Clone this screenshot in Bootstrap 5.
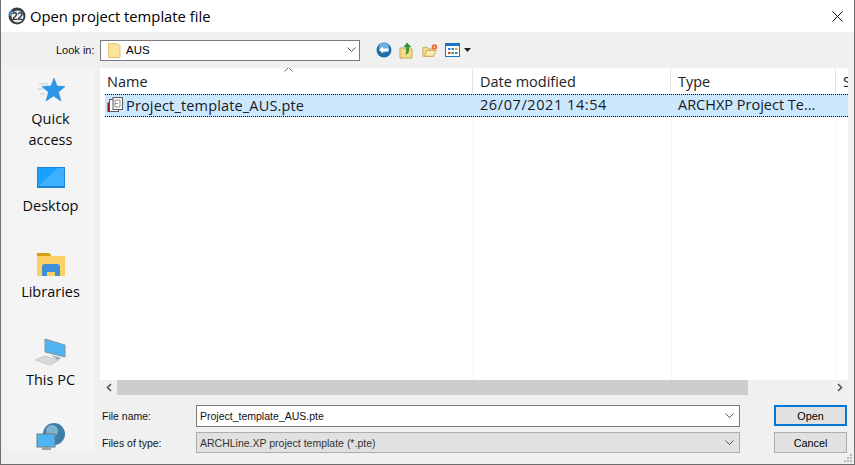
<!DOCTYPE html>
<html lang="en"><head><meta charset="utf-8"><title>Open project template file</title>
<link rel="stylesheet" href="https://cdn.jsdelivr.net/npm/bootstrap@5.3.0/dist/css/bootstrap.min.css">
<style>
html,body{height:465px;overflow:hidden;background:#f0f0f0}
body{font-family:"Open Sans","Noto Sans",sans-serif;color:#000}
.dlg{width:855px;height:465px;border:solid #6e6e6e;border-width:0 1px 1px 1px;background:#f0f0f0;position:relative;overflow:hidden}
.ttl{height:32px;background:#fff;padding-left:7px;font-size:14.8px;gap:4px}
.ttl-x{width:11px;height:11px;margin-right:11px}
.tools{height:36px;padding-left:55px}
.lbl{width:44px;font:11px "Liberation Sans",sans-serif;color:#111}
.look{width:260px;height:21px;background:#fff;border:1px solid #7a7a7a;padding:0 3px 0 7px;gap:5px;font:11.5px "Liberation Sans",sans-serif}
.tbi{margin-left:16px;gap:7px}
.mid{height:327px;padding-left:6px;gap:6px}
.side{width:87px;height:382px;background:#f4f4f4;overflow:hidden;text-align:center;font-size:14.5px;line-height:21px;color:#0c0c0c;flex:none}
.side-it{height:86px;display:flow-root}
.side-it svg{display:block;margin-left:auto;margin-right:auto}
.sq{height:92px;padding-top:9px}
.sq svg{margin-bottom:3px}
.sd svg{margin-top:7px;margin-bottom:7px}
.sl svg{margin-top:6px;margin-bottom:5px}
.sp svg{margin-top:6px;margin-bottom:3px}
.sn svg{margin-top:5px}
.pane{width:748px}
.list{height:312px;background:#fff;position:relative;overflow:hidden}
.hdr{height:26px;font-size:14.5px;color:#222;position:relative}
.cl1{width:373px;padding-left:7px}.cl2{width:198px;padding-left:7px}.cl3{width:165px;padding-left:7px}.cl4{padding-left:7px;width:12px;overflow:hidden}
.hdr>div{border-right:1px solid #e5e5e5;height:26px;line-height:27px}
.hdr>.cl4{border:0}
.sort{position:absolute;left:184px;top:-1px}
.sel{height:23px;margin-left:5px;background:#cce8ff;border-top:1px dotted #000;border-bottom:1px dotted #000;font-size:14.5px;color:#1a1a1a;line-height:20px;position:relative;z-index:1}
.sel>div{white-space:nowrap;overflow:hidden}
.s1{width:368px;padding-left:2px;gap:2px;letter-spacing:.16px}.s2{width:198px;padding-left:7px;letter-spacing:.58px}.s3{width:175px;padding-left:7px}
.gl{position:absolute;top:26px;bottom:0;width:1px;background:#f1f5fa}
.scr{height:15px;background:#f0f0f0}
.arr{width:17px;height:15px;flex:none}
.thumb{width:631px;background:#cdcdcd}
.bot{position:absolute;left:101px;top:405px;width:746px}
.frow{height:21px}
.frow+.frow{margin-top:6px}
.flb{width:94px;font:10.5px "Liberation Sans",sans-serif;color:#111}
.fld{width:544px;height:22px;border:1px solid #7a7a7a;background:#fff;padding:0 5px 0 3px;font:10.5px "Liberation Sans",sans-serif;color:#111}
.fld.dis{background:#e1e1e1;border-color:#adadad;height:21px;color:#333}
.wbtn{width:73px;height:21px;margin-left:34px;border:1px solid #adadad;background:#e1e1e1;border-radius:0;padding:0;font:10.8px "Liberation Sans",sans-serif;color:#000}
.wbtn.on{border:2px solid #0078d7}
.grip{position:absolute;right:1px;bottom:1px}
</style></head><body>
<div class="dlg d-flex flex-column">
<div class="ttl d-flex align-items-center flex-none">
<svg width="18" height="18" viewBox="0 0 18 18"><circle cx="9" cy="9" r="8.5" fill="#3a3f45"/><path d="M1 9a8 8 0 0 1 3-6l2 3a4 4 0 0 0-1 3z" fill="#4a8fd0"/><circle cx="9.5" cy="9.5" r="6" fill="#eef1f3"/><text x="9.5" y="13" font-size="10" font-weight="700" text-anchor="middle" font-family="Liberation Sans" fill="#2e3338">22</text></svg>
<span class="flex-grow-1">Open project template file</span>
<svg class="ttl-x" viewBox="0 0 11 11"><path d="M.5.5l10 10M10.500.5l-10 10" stroke="#111" stroke-width="1"/></svg>
</div>
<div class="tools d-flex align-items-center">
<span class="lbl">Look in:</span>
<div class="look d-flex align-items-center">
<svg width="13" height="16" viewBox="0 0 13 16"><path d="M.5 1.500h8l3.500 2v12H.5z" fill="#fbe39a" stroke="#e3c36f"/></svg>
<span class="flex-grow-1">AUS</span>
<svg width="9" height="6" viewBox="0 0 9 6"><path d="M.5.5l4 4 4-4" fill="none" stroke="#555"/></svg>
</div>
<div class="tbi d-flex align-items-center">
<svg width="16" height="16" viewBox="0 0 16 16"><circle cx="8" cy="8" r="7.500" fill="#1c6fa8"/><circle cx="8" cy="5.500" r="5" fill="#6cb2dc"/><path d="M3 8l4-3.500v2h5.500v3H7v2z" fill="#fff"/></svg>
<svg width="16" height="17" viewBox="0 0 16 17"><path d="M1 6h4l1 1h7v9H1z" fill="#f5dc8c" stroke="#c9a653"/><path d="M8 1l4 4h-2.500v4c0 2-1.500 3-3 3 1-1 1-2 1-3V5H5z" fill="#2c9a2c" stroke="#1c701c" stroke-width=".5"/></svg>
<svg width="16" height="15" viewBox="0 0 18 15"><path d="M1 4h5l1 1.500h6V14H1z" fill="#f5dc8c" stroke="#c9a653"/><path d="M3 14l2-6.500h11L13 14z" fill="#fbeaae" stroke="#c9a653"/><circle cx="14" cy="3.500" r="3" fill="#f0623a"/><circle cx="14" cy="3.500" r="1.200" fill="#ffe08a"/></svg>
<span class="d-flex align-items-center gap-1">
<svg width="15" height="14" viewBox="0 0 15 14"><rect x=".5" y=".5" width="14" height="13" fill="#fff" stroke="#1c74c8"/><rect x="1" y="1" width="13" height="2" fill="#1c74c8"/><g><rect x="3" y="5" width="2.500" height="2" fill="#3a7fd0"/><rect x="6.500" y="5" width="2.500" height="2" fill="#3a7fd0"/><rect x="10" y="5" width="2.500" height="2" fill="#e0a030"/><rect x="3" y="9" width="2.500" height="2" fill="#d05030"/><rect x="6.500" y="9" width="2.500" height="2" fill="#40a040"/><rect x="10" y="9" width="2.500" height="2" fill="#3a7fd0"/></g></svg>
<svg width="7" height="4" viewBox="0 0 7 4"><path d="M0 0h7L3.500 4z" fill="#222"/></svg>
</span>
</div>
</div>
<div class="mid d-flex">
<div class="side">
<div class="side-it sq">
<svg width="30" height="28" viewBox="0 0 30 28"><path d="M3 7l9 0M1 12h7M4 17h5" stroke="#a8d4f4" stroke-width="1"/><path d="M18 1l3 8 8 .5-6.500 5.500 2.500 9-7.500-5-7.500 5 2.500-9L6 9.500l9-.5z" fill="#2a97e8" stroke="#1f80cc" stroke-width=".5"/></svg>
Quick<br>access</div>
<div class="side-it sd">
<svg width="28" height="21" viewBox="0 0 28 21"><rect width="28" height="21" fill="#1b86d8"/><rect x="1" y="1" width="26" height="18" fill="#1aa0ff"/><path d="M1 19L21 1h6v18z" fill="#3db0ff"/></svg>
Desktop</div>
<div class="side-it sl">
<svg width="28" height="24" viewBox="0 0 28 24"><path d="M0 1h12l2 2v4H0z" fill="#d99e0e"/><rect y="4" width="28" height="20" fill="#fbd165"/><path d="M5 24V15a3 3 0 0 1 3-3h12a3 3 0 0 1 3 3v9h-5v-4h-8v4z" fill="#3f8ed8"/></svg>
Libraries</div>
<div class="side-it sp">
<svg width="32" height="28" viewBox="0 0 32 28"><path d="M10 1l20 6v12l-20-5z" fill="#4fb4f4" stroke="#8a9298"/><path d="M16 17l10 3-3 2z" fill="#9aa2a8"/><path d="M0 22l10-4 14 4-9 5z" fill="#d6dadc" stroke="#a8aeb2" stroke-width=".5"/></svg>
This PC</div>
<div class="side-it sn">
<svg width="30" height="28" viewBox="0 0 30 28"><circle cx="18" cy="11" r="11" fill="#3f7fa6"/><circle cx="16" cy="8" r="6" fill="#7fb2cf"/><rect x="1" y="11" width="18" height="13" fill="#4fb4f4" stroke="#6d7a84"/><rect x="6" y="24" width="9" height="4" fill="#9aa2a8"/></svg>
</div>
</div>
<div class="pane">
<div class="list">
<div class="hdr d-flex">
<div class="cl1">Name</div><div class="cl2">Date modified</div><div class="cl3">Type</div><div class="cl4">S</div>
<svg class="sort" width="9" height="5" viewBox="0 0 9 5"><path d="M.5 4.500l4-4 4 4" fill="none" stroke="#777"/></svg>
</div>
<div class="sel d-flex">
<div class="s1 d-flex align-items-center">
<svg width="17" height="17" viewBox="0 0 17 17" class="flex-shrink-0"><rect x=".5" y="5.500" width="5" height="9.500" fill="#8a1a1a"/><rect x="2.500" y="2.500" width="9" height="12" fill="#fff" stroke="#555"/><rect x="6" y=".5" width="9.500" height="12" fill="#fff" stroke="#555"/><path d="M8 3h5v7H8zM8 6.500h3" fill="none" stroke="#777" stroke-width=".8"/></svg>
<span>Project_template_AUS.pte</span></div>
<div class="s2">26/07/2021 14:54</div>
<div class="s3">ARCHXP Project Te...</div>
</div>
<div class="gl" style="left:373px"></div><div class="gl" style="left:571px"></div><div class="gl" style="left:736px"></div>
</div>
<div class="scr d-flex">
<div class="arr d-flex align-items-center justify-content-center"><svg width="6" height="9" viewBox="0 0 6 9"><path d="M5 1L1.500 4.500 5 8" fill="none" stroke="#555" stroke-width="1.600"/></svg></div>
<div class="thumb"></div>
<div class="flex-grow-1"></div>
<div class="arr d-flex align-items-center justify-content-center"><svg width="6" height="9" viewBox="0 0 6 9"><path d="M1 1l3.500 3.500L1 8" fill="none" stroke="#555" stroke-width="1.600"/></svg></div>
</div>
</div>
</div>
<div class="bot">
<div class="frow d-flex align-items-center">
<span class="flb">File name:</span>
<div class="fld d-flex align-items-center justify-content-between"><span>Project_template_AUS.pte</span><svg width="9" height="6" viewBox="0 0 9 6"><path d="M.5.5l4 4 4-4" fill="none" stroke="#555"/></svg></div>
<button type="button" class="btn wbtn on">Open</button>
</div>
<div class="frow d-flex align-items-center">
<span class="flb">Files of type:</span>
<div class="fld dis d-flex align-items-center justify-content-between"><span>ARCHLine.XP project template (*.pte)</span><svg width="9" height="6" viewBox="0 0 9 6"><path d="M.5.5l4 4 4-4" fill="none" stroke="#555"/></svg></div>
<button type="button" class="btn wbtn">Cancel</button>
</div>
</div>
<svg class="grip" width="10" height="10" viewBox="0 0 10 10"><g fill="#b8b8b8"><rect x="7" y="1" width="2" height="2"/><rect x="4" y="4" width="2" height="2"/><rect x="7" y="4" width="2" height="2"/><rect x="1" y="7" width="2" height="2"/><rect x="4" y="7" width="2" height="2"/><rect x="7" y="7" width="2" height="2"/></g></svg>
</div>
</body></html>
